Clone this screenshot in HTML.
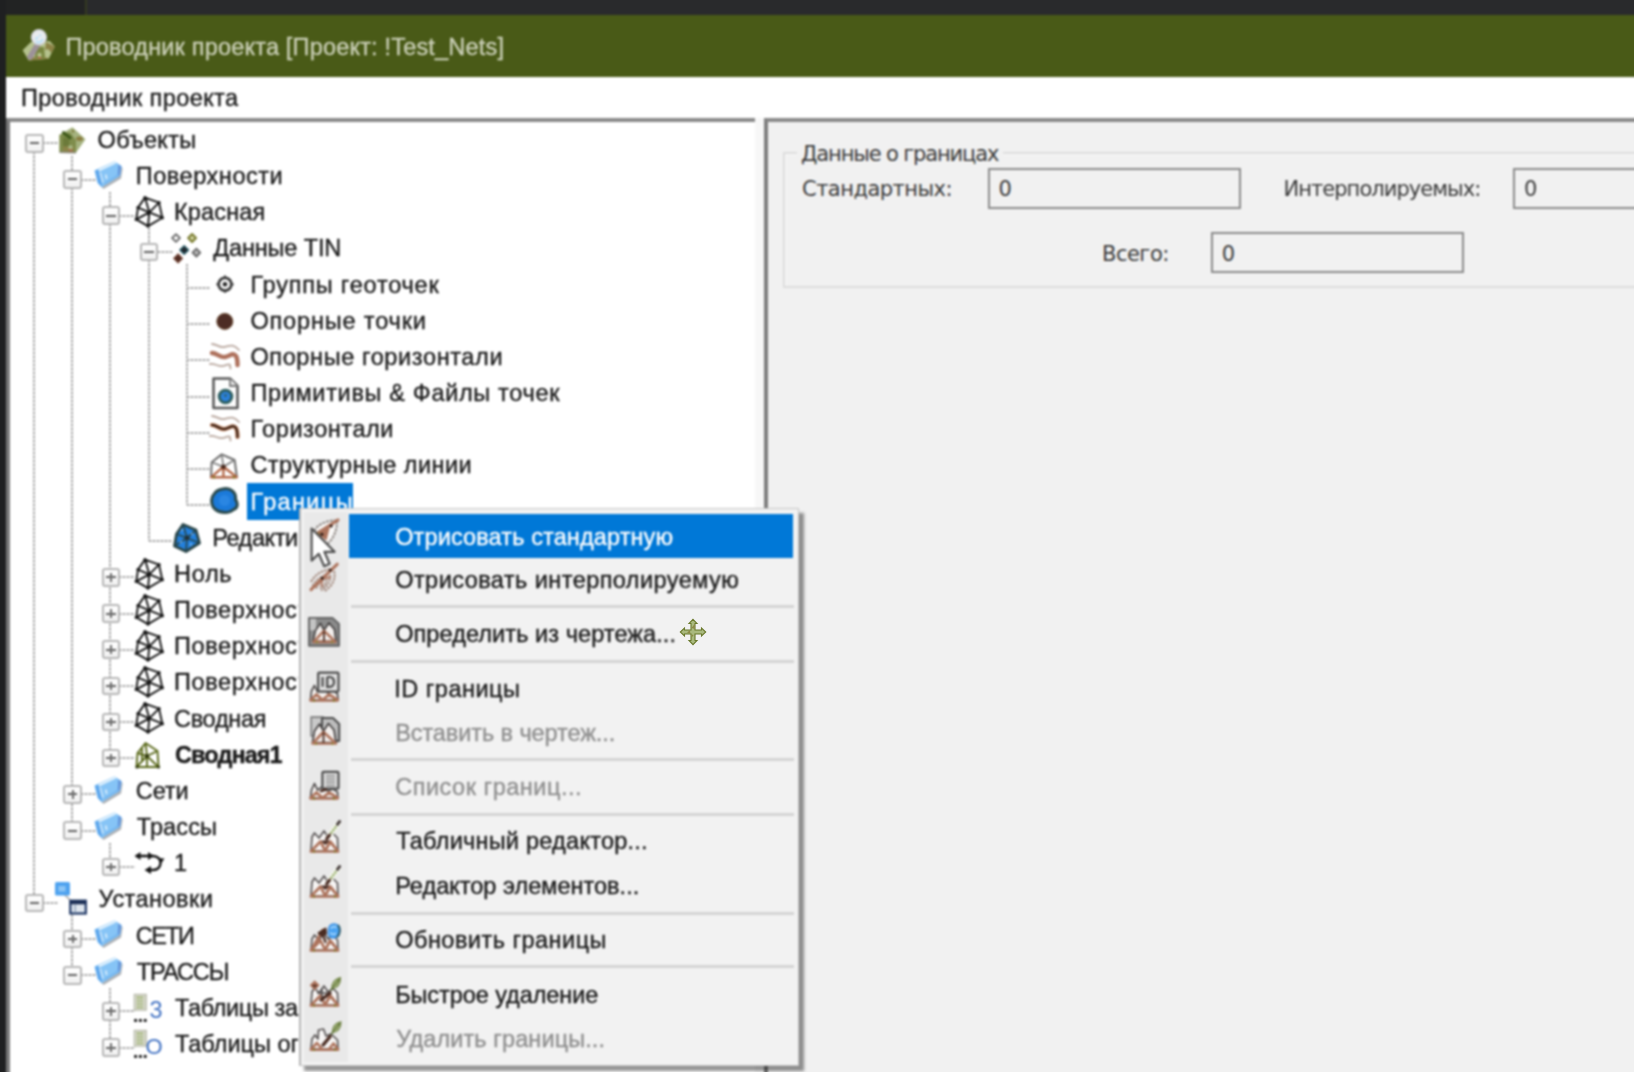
<!DOCTYPE html>
<html lang="ru"><head><meta charset="utf-8"><title>Проводник проекта</title>
<style>
html,body{margin:0;padding:0;background:#26282a}
body{width:1634px;height:1072px;overflow:hidden;background:#f0f0f0;font-family:"Liberation Sans",sans-serif}
#root{position:absolute;left:0;top:0;width:1634px;height:1072px;background:#f0f0f0;filter:blur(0.8px)}
.t{position:absolute;white-space:pre;line-height:30px;height:30px;-webkit-text-stroke:0.35px currentColor}
.ln{position:absolute}
.vl{background:repeating-linear-gradient(180deg,#a8a8a8 0,#a8a8a8 2px,#dcdcdc 2px,#dcdcdc 4px)}
.hl{background:repeating-linear-gradient(90deg,#a8a8a8 0,#a8a8a8 2px,#dcdcdc 2px,#dcdcdc 4px)}
.exp{position:absolute;width:14.5px;height:14.5px;border:2px solid #b6b6b6;background:linear-gradient(#fff,#f1f1f1);border-radius:3px}
.exp .h{position:absolute;left:2.5px;top:6.25px;width:9.5px;height:2px;background:#606060}
.exp .v{position:absolute;left:6.25px;top:3px;width:2px;height:8.5px;background:#6c6c6c}
.ic{position:absolute;overflow:visible}
#tree{position:absolute;left:0;top:0;width:755px;height:1090px;overflow:hidden}
.menu{position:absolute;background:#f2f2f2;box-shadow:5px 5px 2.5px rgba(0,0,0,.42);border:1px solid #c6c6c6;border-left:2px solid #b6b6b6;box-sizing:border-box}
.menu .gut{position:absolute;left:3px;top:3px;bottom:3px;width:44px;background:#e9e9e9}
body>.ic{position:absolute}

</style></head>
<body>
<div id="root">
<div style="position:absolute;left:-10px;top:-10px;width:1660px;height:26px;background:#292a2c"></div>
<div style="position:absolute;left:-10px;top:-10px;width:96px;height:25px;background:#222323"></div>
<div style="position:absolute;left:85px;top:-10px;width:2px;height:25px;background:#353a22"></div>
<div style="position:absolute;left:-10px;top:-10px;width:16px;height:1100px;background:#1f2021"></div>
<div style="position:absolute;left:6px;top:15px;width:1650px;height:62px;background:#495a17"></div>
<div style="position:absolute;left:6px;top:77px;width:1650px;height:41px;background:#ffffff"></div>
<div style="position:absolute;left:6px;top:118px;width:749px;height:975px;background:#fff;border-top:4px solid #8a8a8a;border-left:4px solid #7a7a7a;box-sizing:border-box"></div>
<div style="position:absolute;left:755px;top:118px;width:9px;height:975px;background:#f7f7f7"></div>
<div style="position:absolute;left:764px;top:118px;width:895px;height:975px;background:#f1f1f1;border-top:4px solid #8a8a8a;border-left:4px solid #7e7e7e;box-sizing:border-box"></div>
<svg class="ic" style="left:18px;top:26px" width="42" height="40" viewBox="18 26 42 40"><polygon points="22.6,50.3 31,42 49.7,41 54.8,46.6 48.7,58.7 28.7,60.6" fill="#b5c28d"/><polygon points="46,42 54.8,46.6 51.5,53 48,49 45,50" fill="#8c8246"/><polygon points="30,57 47,57.5 48.7,58.7 28.7,60.6" fill="#8c8246"/><polygon points="36,47 44,47 45,58 35,58" fill="#78863f"/><path d="M38,44 L30,57" stroke="#9d9298" stroke-width="5.5" stroke-linecap="round"/><circle cx="39.5" cy="55" r="2.2" fill="#b5c28d"/><path d="M38,57 l3,1" stroke="#c8564a" stroke-width="1.2"/><circle cx="38.9" cy="37.3" r="7.6" fill="#e9ebee" stroke="#c9cbd2" stroke-width="1.2"/><path d="M36,39 l1.5,-1.5 M36.5,42 c2.5,1 5,0 6,-2.5 M40,35.5 h0.5" stroke="#a9dcfb" stroke-width="1.7" stroke-linecap="round" fill="none"/></svg>
<div id="tree">
<div class="ln hl" style="left:43.0px;top:142.3px;width:15.2px;height:2px"></div>
<div class="ln hl" style="left:81.2px;top:178.5px;width:15.2px;height:2px"></div>
<div class="ln hl" style="left:119.4px;top:214.6px;width:15.2px;height:2px"></div>
<div class="ln hl" style="left:157.6px;top:250.8px;width:15.2px;height:2px"></div>
<div class="ln hl" style="left:186.8px;top:287.0px;width:23.2px;height:2px"></div>
<div class="ln hl" style="left:186.8px;top:323.2px;width:23.2px;height:2px"></div>
<div class="ln hl" style="left:186.8px;top:359.3px;width:23.2px;height:2px"></div>
<div class="ln hl" style="left:186.8px;top:395.5px;width:23.2px;height:2px"></div>
<div class="ln hl" style="left:186.8px;top:431.7px;width:23.2px;height:2px"></div>
<div class="ln hl" style="left:186.8px;top:467.8px;width:23.2px;height:2px"></div>
<div class="ln hl" style="left:186.8px;top:504.0px;width:23.2px;height:2px"></div>
<div class="ln hl" style="left:148.6px;top:540.2px;width:23.2px;height:2px"></div>
<div class="ln hl" style="left:119.4px;top:576.3px;width:15.2px;height:2px"></div>
<div class="ln hl" style="left:119.4px;top:612.5px;width:15.2px;height:2px"></div>
<div class="ln hl" style="left:119.4px;top:648.7px;width:15.2px;height:2px"></div>
<div class="ln hl" style="left:119.4px;top:684.9px;width:15.2px;height:2px"></div>
<div class="ln hl" style="left:119.4px;top:721.0px;width:15.2px;height:2px"></div>
<div class="ln hl" style="left:119.4px;top:757.2px;width:15.2px;height:2px"></div>
<div class="ln hl" style="left:81.2px;top:793.4px;width:15.2px;height:2px"></div>
<div class="ln hl" style="left:81.2px;top:829.5px;width:15.2px;height:2px"></div>
<div class="ln hl" style="left:119.4px;top:865.7px;width:15.2px;height:2px"></div>
<div class="ln hl" style="left:43.0px;top:901.9px;width:15.2px;height:2px"></div>
<div class="ln hl" style="left:81.2px;top:938.0px;width:15.2px;height:2px"></div>
<div class="ln hl" style="left:81.2px;top:974.2px;width:15.2px;height:2px"></div>
<div class="ln hl" style="left:119.4px;top:1010.4px;width:15.2px;height:2px"></div>
<div class="ln hl" style="left:119.4px;top:1046.5px;width:15.2px;height:2px"></div>
<div class="ln vl" style="left:71.2px;top:155.8px;width:2px;height:674.7px"></div>
<div class="ln vl" style="left:109.4px;top:192.0px;width:2px;height:566.2px"></div>
<div class="ln vl" style="left:147.6px;top:228.1px;width:2px;height:313.0px"></div>
<div class="ln vl" style="left:185.8px;top:264.3px;width:2px;height:240.7px"></div>
<div class="ln vl" style="left:109.4px;top:843.0px;width:2px;height:23.7px"></div>
<div class="ln vl" style="left:71.2px;top:915.4px;width:2px;height:59.8px"></div>
<div class="ln vl" style="left:109.4px;top:987.7px;width:2px;height:59.8px"></div>
<div class="ln vl" style="left:33.0px;top:152.3px;width:2px;height:741.6px"></div>
<div class="exp" style="left:25.1px;top:134.1px"><i class="h"></i></div>
<svg class="ic" style="left:54.2px;top:121.7px" width="36" height="36" viewBox="-18.0 -18.0 36 36"><g transform="translate(0,1.3)"><polygon points="-12.5,-6.5 0.5,-14 13.5,-2 4,11.5 -12.5,11" fill="#a5b27f"/><polygon points="-12.5,-6.5 -2,-9 4,-1 4,11.5 -12.5,11" fill="#7f8d4c"/><polygon points="-9,-4 -3,-2 -2,9 -9,9" fill="#6b7a3a"/><path d="M-8.5,-8.5 L-2,-3.5" stroke="#3f591a" stroke-width="3.2" stroke-linecap="round"/><ellipse cx="7.5" cy="-2.5" rx="3.4" ry="2.2" fill="#8a7e42"/><path d="M0,-11 l2,2 m0,-2 l-2,2" stroke="#7c7a3a" stroke-width="1.3"/><rect x="-9" y="5" width="11" height="5.5" fill="#8b8448"/><circle cx="-1.5" cy="6" r="2.2" fill="#a7b784"/><path d="M-3,8 l3,2" stroke="#c65a4a" stroke-width="1.2"/><path d="M-12.5,11 L4,11.5" stroke="#8d8a80" stroke-width="1.6"/></g></svg>
<div class="exp" style="left:63.4px;top:170.2px"><i class="h"></i></div>
<svg class="ic" style="left:92.4px;top:157.8px" width="36" height="36" viewBox="-18.0 -18.0 36 36"><polygon points="-14,-2 -10.5,9 -6.5,13 11,2.5 12.6,-7.5 9.5,-11.5" fill="#adb0b4"/><polygon points="-14.9,-5.1 4.5,-14 11.2,-9.5 9.7,-0.6 -8.2,10.6 -11.9,6.9" fill="#86c4f6" stroke="#86c4f6" stroke-width="1.2" stroke-linejoin="round"/><polygon points="-14.9,-5.1 -11.5,-6.7 -8,8.5 -8.2,10.6 -11.9,6.9" fill="#5ea6ec"/><polygon points="8.3,-11.4 11.2,-9.5 9.7,-0.6 7.6,0.7" fill="#6494da"/><path d="M-10.5,-6 L5,-13.2" stroke="#e3f2fd" stroke-width="2.2" stroke-linecap="round"/><path d="M-9.8,-3 L-7.2,6" stroke="#c4e2fa" stroke-width="1.8" stroke-linecap="round"/><path d="M-4.2,-1.5 l0.9,4.5" stroke="#e3f2fd" stroke-width="1.5"/><path d="M-6,8 L9,-1.2" stroke="#6fb2ee" stroke-width="1.4"/></svg>
<div class="exp" style="left:101.6px;top:206.4px"><i class="h"></i></div>
<svg class="ic" style="left:130.6px;top:194.0px" width="36" height="36" viewBox="-18.0 -18.0 36 36"><path d="M-4,-14.4 L10,-9.4 L13.3,5.7 L-1,14.1 L-12.7,7.4 L-11,-4.4 Z M0.3,0.3 L-4,-14.4 M0.3,0.3 L10,-9.4 M0.3,0.3 L13.3,5.7 M0.3,0.3 L-1,14.1 M0.3,0.3 L-12.7,7.4 M0.3,0.3 L-11,-4.4" fill="none" stroke="#151515" stroke-width="1.9" stroke-linejoin="round"/><circle cx="-4" cy="-14.4" r="1.7" fill="#151515"/><circle cx="10" cy="-9.4" r="1.7" fill="#151515"/><circle cx="13.3" cy="5.7" r="1.7" fill="#151515"/><circle cx="-1" cy="14.1" r="1.7" fill="#151515"/><circle cx="-12.7" cy="7.4" r="1.7" fill="#151515"/><circle cx="-11" cy="-4.4" r="1.7" fill="#151515"/><circle cx="0.3" cy="0.3" r="1.7" fill="#151515"/></svg>
<div class="exp" style="left:139.8px;top:242.6px"><i class="h"></i></div>
<svg class="ic" style="left:168.8px;top:230.2px" width="36" height="36" viewBox="-18.0 -18.0 36 36"><polygon points="-11,-13.9 -7.1,-10 -11,-6.1 -14.9,-10" fill="#fff" stroke="#6e6e6e" stroke-width="1.8" stroke-linejoin="round"/><polygon points="5.1,-13.9 9.0,-10 5.1,-6.1 1.1999999999999997,-10" fill="#d9dcae" stroke="#7d7f35" stroke-width="2.2" stroke-linejoin="round"/><polygon points="-2.8,-2.4000000000000004 1.6000000000000005,2 -2.8,6.4 -7.2,2" fill="#20262c" stroke="#2e6470" stroke-width="1.3" stroke-linejoin="round"/><polygon points="9.4,0.6999999999999997 13.3,4.6 9.4,8.5 5.5,4.6" fill="#b9b9b9" stroke="#666" stroke-width="1.8" stroke-linejoin="round"/><polygon points="-8.9,6.0 -4.5,10.4 -8.9,14.8 -13.3,10.4" fill="#4f2b22" stroke="#7a4a3a" stroke-width="1.2" stroke-linejoin="round"/></svg>
<svg class="ic" style="left:207.0px;top:266.3px" width="36" height="36" viewBox="-18.0 -18.0 36 36"><circle cx="0" cy="0.2" r="6.4" fill="#fff" stroke="#3a3a3a" stroke-width="2.8"/><circle cx="0" cy="0.2" r="2.3" fill="#222"/><path d="M-8.6,0.2 h3 M5.6,0.2 h3 M0,-8.4 v3 M0,5.8 v3" stroke="#3a3a3a" stroke-width="2"/></svg>
<svg class="ic" style="left:207.0px;top:302.5px" width="36" height="36" viewBox="-18.0 -18.0 36 36"><circle cx="-0.2" cy="0.4" r="8" fill="#4d2c24" stroke="#6a4a30" stroke-width="1"/></svg>
<svg class="ic" style="left:207.0px;top:338.7px" width="36" height="36" viewBox="-18.0 -18.0 36 36"><path d="M-13,-13 C-8,-13 -6,-9 -1,-10 C4,-11 8,-14 14,-7" fill="none" stroke="#b9a89f" stroke-width="1.8" stroke-linecap="round"/><path d="M-15,7 C-10,6 -7,10 -2,9 C2,8 4,6 5,8 L5.5,11.5" fill="none" stroke="#b9a89f" stroke-width="1.8" stroke-linecap="round"/><path d="M-13,-4 C-8,-4 -5,1 0,0 C5,-1 8,-5 11,-1 C12.5,1.5 12.5,5 12.5,8" fill="none" stroke="#ae715c" stroke-width="4.4" stroke-linecap="round"/></svg>
<svg class="ic" style="left:207.0px;top:374.9px" width="36" height="36" viewBox="-18.0 -18.0 36 36"><path d="M-11.5,-14.5 H5 L12.5,-7 V15 H-11.5 Z" fill="#fdfdfd" stroke="#5a5a5a" stroke-width="2.6" stroke-linejoin="round"/><path d="M5,-14.5 V-7 H12.5" fill="#e8e8e8" stroke="#7a7a7a" stroke-width="1.8"/><circle cx="0.5" cy="3.5" r="6.3" fill="#2b80dc" stroke="#2f5f60" stroke-width="3"/><path d="M-1.5,1.5 h4 l-2,3 z" fill="#2f5f60"/></svg>
<svg class="ic" style="left:207.0px;top:411.0px" width="36" height="36" viewBox="-18.0 -18.0 36 36"><path d="M-13,-13 C-8,-13 -6,-9 -1,-10 C4,-11 8,-14 14,-7" fill="none" stroke="#b9a89f" stroke-width="1.8" stroke-linecap="round"/><path d="M-15,7 C-10,6 -7,10 -2,9 C2,8 4,6 5,8 L5.5,11.5" fill="none" stroke="#b9a89f" stroke-width="1.8" stroke-linecap="round"/><path d="M-13,-4 C-8,-4 -5,1 0,0 C5,-1 8,-5 11,-1 C12.5,1.5 12.5,5 12.5,8" fill="none" stroke="#b9754f" stroke-width="4.2" stroke-linecap="round"/><path d="M-13,-4 C-8,-4 -5,1 0,0 C5,-1 8,-5 11,-1 C12.5,1.5 12.5,5 12.5,8" fill="none" stroke="#2c1d16" stroke-width="1.9" stroke-linecap="round"/></svg>
<svg class="ic" style="left:207.0px;top:447.2px" width="36" height="36" viewBox="-18.0 -18.0 36 36"><path d="M-14,12.5 L-13.3,-2.8 L-3.3,-10.6 L9.6,-5 L11.9,12.5" fill="#fff" stroke="#6d6d6d" stroke-width="2" stroke-linejoin="round"/><path d="M-3.3,-10.6 L-1.6,1.7 M-13.3,-2.8 L-1.6,1.7 M9.6,-5 L-1.6,1.7" stroke="#7a7a7a" stroke-width="1.6"/><path d="M-14,12.3 L-1.6,1.7 L11.9,12.3 Z M-1.6,1.7 V12.3" fill="none" stroke="#b4694a" stroke-width="2.4" stroke-linejoin="round"/><circle cx="-1.6" cy="1.7" r="2.3" fill="#43251a"/><circle cx="-11" cy="12.3" r="1.2" fill="#7d7a20"/><circle cx="9" cy="12.3" r="1.2" fill="#7d7a20"/></svg>
<svg class="ic" style="left:207.0px;top:483.4px" width="36" height="36" viewBox="-18.0 -18.0 36 36"><path d="M-2.5,-12 C5.5,-14 11.5,-8.5 10.5,-1.5 C13.5,2.5 12.5,7.5 8.5,8.5 C4.5,12.5 -4.5,12.5 -9.5,8.5 C-14.5,4.5 -14.5,-3.5 -10.5,-7.5 C-8.5,-10.5 -5.5,-11.5 -2.5,-12 Z" fill="#1b7ada" stroke="#2b4a4d" stroke-width="3"/><circle cx="-0.5" cy="-0.5" r="5.5" fill="#2a86e2"/></svg>
<div style="position:absolute;left:246.8px;top:483.2px;width:106.4px;height:36.4px;background:#0078d7"></div>
<svg class="ic" style="left:168.8px;top:519.5px" width="36" height="36" viewBox="-18.0 -18.0 36 36"><path d="M-4,-13.5 L9,-8 L12.5,5 L-1,13.5 L-12.5,8 L-10.5,-4 Z" fill="#2380dd" stroke="#2a4548" stroke-width="2.8" stroke-linejoin="round"/><path d="M0,0 L-4,-13.5 M0,0 L9,-8 M0,0 L12.5,5 M0,0 L-1,13.5 M0,0 L-12.5,8 M0,0 L-10.5,-4" stroke="#27474f" stroke-width="1.7"/><circle cx="0" cy="0" r="2.4" fill="#20323a"/><path d="M-6,-7 l2,-2 M4,-5 l2,2 M-7,5 l2,-2 M4,8 l0,-3" stroke="#7fbaf2" stroke-width="1.4"/></svg>
<div class="exp" style="left:101.6px;top:568.1px"><i class="h"></i><i class="v"></i></div>
<svg class="ic" style="left:130.6px;top:555.7px" width="36" height="36" viewBox="-18.0 -18.0 36 36"><path d="M-4,-14.4 L10,-9.4 L13.3,5.7 L-1,14.1 L-12.7,7.4 L-11,-4.4 Z M0.3,0.3 L-4,-14.4 M0.3,0.3 L10,-9.4 M0.3,0.3 L13.3,5.7 M0.3,0.3 L-1,14.1 M0.3,0.3 L-12.7,7.4 M0.3,0.3 L-11,-4.4" fill="none" stroke="#151515" stroke-width="1.9" stroke-linejoin="round"/><circle cx="-4" cy="-14.4" r="1.7" fill="#151515"/><circle cx="10" cy="-9.4" r="1.7" fill="#151515"/><circle cx="13.3" cy="5.7" r="1.7" fill="#151515"/><circle cx="-1" cy="14.1" r="1.7" fill="#151515"/><circle cx="-12.7" cy="7.4" r="1.7" fill="#151515"/><circle cx="-11" cy="-4.4" r="1.7" fill="#151515"/><circle cx="0.3" cy="0.3" r="1.7" fill="#151515"/></svg>
<div class="exp" style="left:101.6px;top:604.3px"><i class="h"></i><i class="v"></i></div>
<svg class="ic" style="left:130.6px;top:591.9px" width="36" height="36" viewBox="-18.0 -18.0 36 36"><path d="M-4,-14.4 L10,-9.4 L13.3,5.7 L-1,14.1 L-12.7,7.4 L-11,-4.4 Z M0.3,0.3 L-4,-14.4 M0.3,0.3 L10,-9.4 M0.3,0.3 L13.3,5.7 M0.3,0.3 L-1,14.1 M0.3,0.3 L-12.7,7.4 M0.3,0.3 L-11,-4.4" fill="none" stroke="#151515" stroke-width="1.9" stroke-linejoin="round"/><circle cx="-4" cy="-14.4" r="1.7" fill="#151515"/><circle cx="10" cy="-9.4" r="1.7" fill="#151515"/><circle cx="13.3" cy="5.7" r="1.7" fill="#151515"/><circle cx="-1" cy="14.1" r="1.7" fill="#151515"/><circle cx="-12.7" cy="7.4" r="1.7" fill="#151515"/><circle cx="-11" cy="-4.4" r="1.7" fill="#151515"/><circle cx="0.3" cy="0.3" r="1.7" fill="#151515"/></svg>
<div class="exp" style="left:101.6px;top:640.4px"><i class="h"></i><i class="v"></i></div>
<svg class="ic" style="left:130.6px;top:628.0px" width="36" height="36" viewBox="-18.0 -18.0 36 36"><path d="M-4,-14.4 L10,-9.4 L13.3,5.7 L-1,14.1 L-12.7,7.4 L-11,-4.4 Z M0.3,0.3 L-4,-14.4 M0.3,0.3 L10,-9.4 M0.3,0.3 L13.3,5.7 M0.3,0.3 L-1,14.1 M0.3,0.3 L-12.7,7.4 M0.3,0.3 L-11,-4.4" fill="none" stroke="#151515" stroke-width="1.9" stroke-linejoin="round"/><circle cx="-4" cy="-14.4" r="1.7" fill="#151515"/><circle cx="10" cy="-9.4" r="1.7" fill="#151515"/><circle cx="13.3" cy="5.7" r="1.7" fill="#151515"/><circle cx="-1" cy="14.1" r="1.7" fill="#151515"/><circle cx="-12.7" cy="7.4" r="1.7" fill="#151515"/><circle cx="-11" cy="-4.4" r="1.7" fill="#151515"/><circle cx="0.3" cy="0.3" r="1.7" fill="#151515"/></svg>
<div class="exp" style="left:101.6px;top:676.6px"><i class="h"></i><i class="v"></i></div>
<svg class="ic" style="left:130.6px;top:664.2px" width="36" height="36" viewBox="-18.0 -18.0 36 36"><path d="M-4,-14.4 L10,-9.4 L13.3,5.7 L-1,14.1 L-12.7,7.4 L-11,-4.4 Z M0.3,0.3 L-4,-14.4 M0.3,0.3 L10,-9.4 M0.3,0.3 L13.3,5.7 M0.3,0.3 L-1,14.1 M0.3,0.3 L-12.7,7.4 M0.3,0.3 L-11,-4.4" fill="none" stroke="#151515" stroke-width="1.9" stroke-linejoin="round"/><circle cx="-4" cy="-14.4" r="1.7" fill="#151515"/><circle cx="10" cy="-9.4" r="1.7" fill="#151515"/><circle cx="13.3" cy="5.7" r="1.7" fill="#151515"/><circle cx="-1" cy="14.1" r="1.7" fill="#151515"/><circle cx="-12.7" cy="7.4" r="1.7" fill="#151515"/><circle cx="-11" cy="-4.4" r="1.7" fill="#151515"/><circle cx="0.3" cy="0.3" r="1.7" fill="#151515"/></svg>
<div class="exp" style="left:101.6px;top:712.8px"><i class="h"></i><i class="v"></i></div>
<svg class="ic" style="left:130.6px;top:700.4px" width="36" height="36" viewBox="-18.0 -18.0 36 36"><path d="M-4,-14.4 L10,-9.4 L13.3,5.7 L-1,14.1 L-12.7,7.4 L-11,-4.4 Z M0.3,0.3 L-4,-14.4 M0.3,0.3 L10,-9.4 M0.3,0.3 L13.3,5.7 M0.3,0.3 L-1,14.1 M0.3,0.3 L-12.7,7.4 M0.3,0.3 L-11,-4.4" fill="none" stroke="#151515" stroke-width="1.9" stroke-linejoin="round"/><circle cx="-4" cy="-14.4" r="1.7" fill="#151515"/><circle cx="10" cy="-9.4" r="1.7" fill="#151515"/><circle cx="13.3" cy="5.7" r="1.7" fill="#151515"/><circle cx="-1" cy="14.1" r="1.7" fill="#151515"/><circle cx="-12.7" cy="7.4" r="1.7" fill="#151515"/><circle cx="-11" cy="-4.4" r="1.7" fill="#151515"/><circle cx="0.3" cy="0.3" r="1.7" fill="#151515"/></svg>
<div class="exp" style="left:101.6px;top:748.9px"><i class="h"></i><i class="v"></i></div>
<svg class="ic" style="left:130.6px;top:736.5px" width="36" height="36" viewBox="-18.0 -18.0 36 36"><path d="M-12.5,12 L-11.5,-2 L-3.5,-12 L8.5,-4 L9.5,12 Z M-2,1 L-12.5,12 M-2,1 L9.5,12 M-2,1 L-3.5,-12 M-2,1 L-11.5,-2 M-2,1 L8.5,-4 M-2,1 L-2,12 M-7,-7.5 L-7,6" fill="none" stroke="#5b6a1c" stroke-width="1.9" stroke-linejoin="round"/><circle cx="-2" cy="1" r="2" fill="#2d3510"/><circle cx="-12" cy="12" r="1.6" fill="#2d3510"/><circle cx="9.5" cy="12" r="1.6" fill="#2d3510"/></svg>
<div class="exp" style="left:63.4px;top:785.1px"><i class="h"></i><i class="v"></i></div>
<svg class="ic" style="left:92.4px;top:772.7px" width="36" height="36" viewBox="-18.0 -18.0 36 36"><polygon points="-14,-2 -10.5,9 -6.5,13 11,2.5 12.6,-7.5 9.5,-11.5" fill="#adb0b4"/><polygon points="-14.9,-5.1 4.5,-14 11.2,-9.5 9.7,-0.6 -8.2,10.6 -11.9,6.9" fill="#86c4f6" stroke="#86c4f6" stroke-width="1.2" stroke-linejoin="round"/><polygon points="-14.9,-5.1 -11.5,-6.7 -8,8.5 -8.2,10.6 -11.9,6.9" fill="#5ea6ec"/><polygon points="8.3,-11.4 11.2,-9.5 9.7,-0.6 7.6,0.7" fill="#6494da"/><path d="M-10.5,-6 L5,-13.2" stroke="#e3f2fd" stroke-width="2.2" stroke-linecap="round"/><path d="M-9.8,-3 L-7.2,6" stroke="#c4e2fa" stroke-width="1.8" stroke-linecap="round"/><path d="M-4.2,-1.5 l0.9,4.5" stroke="#e3f2fd" stroke-width="1.5"/><path d="M-6,8 L9,-1.2" stroke="#6fb2ee" stroke-width="1.4"/></svg>
<div class="exp" style="left:63.4px;top:821.3px"><i class="h"></i></div>
<svg class="ic" style="left:92.4px;top:808.9px" width="36" height="36" viewBox="-18.0 -18.0 36 36"><polygon points="-14,-2 -10.5,9 -6.5,13 11,2.5 12.6,-7.5 9.5,-11.5" fill="#adb0b4"/><polygon points="-14.9,-5.1 4.5,-14 11.2,-9.5 9.7,-0.6 -8.2,10.6 -11.9,6.9" fill="#86c4f6" stroke="#86c4f6" stroke-width="1.2" stroke-linejoin="round"/><polygon points="-14.9,-5.1 -11.5,-6.7 -8,8.5 -8.2,10.6 -11.9,6.9" fill="#5ea6ec"/><polygon points="8.3,-11.4 11.2,-9.5 9.7,-0.6 7.6,0.7" fill="#6494da"/><path d="M-10.5,-6 L5,-13.2" stroke="#e3f2fd" stroke-width="2.2" stroke-linecap="round"/><path d="M-9.8,-3 L-7.2,6" stroke="#c4e2fa" stroke-width="1.8" stroke-linecap="round"/><path d="M-4.2,-1.5 l0.9,4.5" stroke="#e3f2fd" stroke-width="1.5"/><path d="M-6,8 L9,-1.2" stroke="#6fb2ee" stroke-width="1.4"/></svg>
<div class="exp" style="left:101.6px;top:857.5px"><i class="h"></i><i class="v"></i></div>
<svg class="ic" style="left:130.6px;top:845.1px" width="36" height="36" viewBox="-18.0 -18.0 36 36"><path d="M-13,-7 H4 C14,-7 14,7 4,7 H-2" fill="none" stroke="#161616" stroke-width="2.4"/><path d="M-14.5,-7 L-8.5,-11 V-3 Z" fill="#161616"/><path d="M5,-7 L-1,-11 V-3 Z" fill="#161616"/><path d="M12.5,0 L8,-5 L15.5,-4.5 Z" fill="#161616"/><path d="M-4.5,7 L2,3 V11 Z" fill="#161616"/></svg>
<div class="exp" style="left:25.1px;top:893.6px"><i class="h"></i></div>
<svg class="ic" style="left:54.2px;top:881.2px" width="36" height="36" viewBox="-18.0 -18.0 36 36"><path d="M-9,-6 L-2,1" stroke="#9a9a9a" stroke-width="1.2"/><rect x="-17" y="-17" width="15" height="13.5" rx="1.5" fill="#4ea2ef"/><rect x="-13.5" y="-13" width="7" height="5.5" fill="#8cc5f6"/><rect x="-1.7" y="1.7" width="15.5" height="12.8" fill="#dfe6ee" stroke="#1f3765" stroke-width="2.2"/><rect x="-1.7" y="1.7" width="15.5" height="3.6" fill="#1c2f55"/><path d="M3.2,5.5 V14" stroke="#8ea0b8" stroke-width="1.4"/></svg>
<div class="exp" style="left:63.4px;top:929.8px"><i class="h"></i><i class="v"></i></div>
<svg class="ic" style="left:92.4px;top:917.4px" width="36" height="36" viewBox="-18.0 -18.0 36 36"><polygon points="-14,-2 -10.5,9 -6.5,13 11,2.5 12.6,-7.5 9.5,-11.5" fill="#adb0b4"/><polygon points="-14.9,-5.1 4.5,-14 11.2,-9.5 9.7,-0.6 -8.2,10.6 -11.9,6.9" fill="#86c4f6" stroke="#86c4f6" stroke-width="1.2" stroke-linejoin="round"/><polygon points="-14.9,-5.1 -11.5,-6.7 -8,8.5 -8.2,10.6 -11.9,6.9" fill="#5ea6ec"/><polygon points="8.3,-11.4 11.2,-9.5 9.7,-0.6 7.6,0.7" fill="#6494da"/><path d="M-10.5,-6 L5,-13.2" stroke="#e3f2fd" stroke-width="2.2" stroke-linecap="round"/><path d="M-9.8,-3 L-7.2,6" stroke="#c4e2fa" stroke-width="1.8" stroke-linecap="round"/><path d="M-4.2,-1.5 l0.9,4.5" stroke="#e3f2fd" stroke-width="1.5"/><path d="M-6,8 L9,-1.2" stroke="#6fb2ee" stroke-width="1.4"/></svg>
<div class="exp" style="left:63.4px;top:966.0px"><i class="h"></i></div>
<svg class="ic" style="left:92.4px;top:953.6px" width="36" height="36" viewBox="-18.0 -18.0 36 36"><polygon points="-14,-2 -10.5,9 -6.5,13 11,2.5 12.6,-7.5 9.5,-11.5" fill="#adb0b4"/><polygon points="-14.9,-5.1 4.5,-14 11.2,-9.5 9.7,-0.6 -8.2,10.6 -11.9,6.9" fill="#86c4f6" stroke="#86c4f6" stroke-width="1.2" stroke-linejoin="round"/><polygon points="-14.9,-5.1 -11.5,-6.7 -8,8.5 -8.2,10.6 -11.9,6.9" fill="#5ea6ec"/><polygon points="8.3,-11.4 11.2,-9.5 9.7,-0.6 7.6,0.7" fill="#6494da"/><path d="M-10.5,-6 L5,-13.2" stroke="#e3f2fd" stroke-width="2.2" stroke-linecap="round"/><path d="M-9.8,-3 L-7.2,6" stroke="#c4e2fa" stroke-width="1.8" stroke-linecap="round"/><path d="M-4.2,-1.5 l0.9,4.5" stroke="#e3f2fd" stroke-width="1.5"/><path d="M-6,8 L9,-1.2" stroke="#6fb2ee" stroke-width="1.4"/></svg>
<div class="exp" style="left:101.6px;top:1002.1px"><i class="h"></i><i class="v"></i></div>
<svg class="ic" style="left:130.6px;top:989.7px" width="36" height="36" viewBox="-18.0 -18.0 36 36"><rect x="-14.8" y="-13.7" width="12.1" height="15.9" fill="#d3d5c6" stroke="#b3b5a6" stroke-width="1"/><path d="M-12,-10.5 h6.5 M-12,-7.2 h6.5 M-12,-3.9 h6.5 M-12,-0.6 h6.5" stroke="#86a548" stroke-width="1.3" stroke-dasharray="2.2 0.9"/><circle cx="-13.4" cy="12.4" r="1.6" fill="#111"/><circle cx="-8.6" cy="12.4" r="1.6" fill="#111"/><circle cx="-3.8" cy="12.4" r="1.6" fill="#111"/><text x="0.6" y="9.6" font-family="Liberation Sans, sans-serif" font-size="23.5" fill="#3f70c2">3</text></svg>
<div class="exp" style="left:101.6px;top:1038.3px"><i class="h"></i><i class="v"></i></div>
<svg class="ic" style="left:130.6px;top:1025.9px" width="36" height="36" viewBox="-18.0 -18.0 36 36"><rect x="-14.8" y="-13.7" width="12.1" height="15.9" fill="#d3d5c6" stroke="#b3b5a6" stroke-width="1"/><path d="M-12,-10.5 h6.5 M-12,-7.2 h6.5 M-12,-3.9 h6.5 M-12,-0.6 h6.5" stroke="#86a548" stroke-width="1.3" stroke-dasharray="2.2 0.9"/><circle cx="-13.4" cy="12.4" r="1.6" fill="#111"/><circle cx="-8.6" cy="12.4" r="1.6" fill="#111"/><circle cx="-3.8" cy="12.4" r="1.6" fill="#111"/><text x="-3.4" y="9.8" font-family="Liberation Sans, sans-serif" font-size="22" fill="#3f70c2">O</text></svg>
<span class="t" style="left:97.6px;top:124.8px;font-size:23.5px;color:#1a1a1a;letter-spacing:0.263px;">Объекты</span>
<span class="t" style="left:135.8px;top:161.0px;font-size:23.5px;color:#1a1a1a;letter-spacing:0.543px;">Поверхности</span>
<span class="t" style="left:174.0px;top:197.1px;font-size:23.5px;color:#1a1a1a;letter-spacing:0.146px;">Красная</span>
<span class="t" style="left:213.2px;top:233.3px;font-size:23.5px;color:#1a1a1a;letter-spacing:-0.135px;">Данные TIN</span>
<span class="t" style="left:250.4px;top:269.5px;font-size:23.5px;color:#1a1a1a;letter-spacing:0.802px;">Группы геоточек</span>
<span class="t" style="left:250.4px;top:305.7px;font-size:23.5px;color:#1a1a1a;letter-spacing:0.851px;">Опорные точки</span>
<span class="t" style="left:250.4px;top:341.8px;font-size:23.5px;color:#1a1a1a;letter-spacing:0.624px;">Опорные горизонтали</span>
<span class="t" style="left:250.4px;top:378.0px;font-size:23.5px;color:#1a1a1a;letter-spacing:0.676px;">Примитивы &amp; Файлы точек</span>
<span class="t" style="left:250.4px;top:414.2px;font-size:23.5px;color:#1a1a1a;letter-spacing:0.564px;">Горизонтали</span>
<span class="t" style="left:250.4px;top:450.3px;font-size:23.5px;color:#1a1a1a;letter-spacing:0.461px;">Структурные линии</span>
<span class="t" style="left:250.4px;top:486.5px;font-size:23.5px;color:#ffffff;letter-spacing:1.365px;">Границы</span>
<span class="t" style="left:212.2px;top:522.7px;font-size:23.5px;color:#1a1a1a;letter-spacing:-0.397px;width:85.6px;overflow:hidden;">Редактирование</span>
<span class="t" style="left:174.0px;top:558.8px;font-size:23.5px;color:#1a1a1a;letter-spacing:0.688px;">Ноль</span>
<span class="t" style="left:174.0px;top:595.0px;font-size:23.5px;color:#1a1a1a;letter-spacing:0.643px;width:123.7px;overflow:hidden;">Поверхность1</span>
<span class="t" style="left:174.0px;top:631.2px;font-size:23.5px;color:#1a1a1a;letter-spacing:0.643px;width:123.7px;overflow:hidden;">Поверхность2</span>
<span class="t" style="left:174.0px;top:667.4px;font-size:23.5px;color:#1a1a1a;letter-spacing:0.643px;width:123.7px;overflow:hidden;">Поверхность3</span>
<span class="t" style="left:174.0px;top:703.5px;font-size:23.5px;color:#1a1a1a;letter-spacing:-0.284px;">Сводная</span>
<span class="t" style="left:175.0px;top:739.7px;font-size:23.5px;color:#1a1a1a;letter-spacing:-0.921px;font-weight:bold;">Сводная1</span>
<span class="t" style="left:135.8px;top:775.9px;font-size:23.5px;color:#1a1a1a;letter-spacing:-0.141px;">Сети</span>
<span class="t" style="left:136.8px;top:812.0px;font-size:23.5px;color:#1a1a1a;letter-spacing:0.105px;">Трассы</span>
<span class="t" style="left:174.0px;top:848.2px;font-size:23.5px;color:#1a1a1a;letter-spacing:0.000px;">1</span>
<span class="t" style="left:98.6px;top:884.4px;font-size:23.5px;color:#1a1a1a;letter-spacing:0.451px;">Установки</span>
<span class="t" style="left:135.8px;top:920.5px;font-size:23.5px;color:#1a1a1a;letter-spacing:-1.600px;">СЕТИ</span>
<span class="t" style="left:136.8px;top:956.7px;font-size:23.5px;color:#1a1a1a;letter-spacing:-1.131px;">ТРАССЫ</span>
<span class="t" style="left:175.0px;top:992.9px;font-size:23.5px;color:#1a1a1a;letter-spacing:-0.363px;width:124.7px;overflow:hidden;">Таблицы занятий</span>
<span class="t" style="left:175.0px;top:1029.0px;font-size:23.5px;color:#1a1a1a;letter-spacing:-0.011px;width:123.4px;overflow:hidden;">Таблицы ограничений</span>
</div>
<div style="position:absolute;left:783px;top:152px;width:870px;height:136px;border:2px solid #dcdcdc;box-sizing:border-box;box-shadow:inset 1px 1px 0 #fafafa"></div>
<div style="position:absolute;left:797px;top:140px;width:206px;height:24px;background:#f1f1f1"></div>
<div style="position:absolute;left:988px;top:168px;width:253px;height:41px;border:2px solid #8a8a8a;background:#f1f1f1;box-sizing:border-box"></div>
<div style="position:absolute;left:1513px;top:168px;width:253px;height:41px;border:2px solid #8a8a8a;background:#f1f1f1;box-sizing:border-box"></div>
<div style="position:absolute;left:1211px;top:232px;width:253px;height:41px;border:2px solid #8a8a8a;background:#f1f1f1;box-sizing:border-box"></div>
<span class="t" style="left:65.5px;top:31.8px;font-size:23.5px;color:#cbd0b8;letter-spacing:0.186px;">Проводник проекта [Проект: !Test_Nets]</span>
<span class="t" style="left:21.0px;top:83.4px;font-size:23.5px;color:#1a1a1a;letter-spacing:0.412px;">Проводник проекта</span>
<span class="t" style="left:801.1px;top:138.6px;font-size:21px;color:#3a3a3a;letter-spacing:-1.150px;font-family:'DejaVu Sans', 'Liberation Sans', sans-serif;-webkit-text-stroke:0;">Данные о границах</span>
<span class="t" style="left:802.0px;top:174.4px;font-size:21px;color:#3a3a3a;letter-spacing:-0.517px;font-family:'DejaVu Sans', 'Liberation Sans', sans-serif;-webkit-text-stroke:0;">Стандартных:</span>
<span class="t" style="left:1283.5px;top:174.4px;font-size:21px;color:#3a3a3a;letter-spacing:-0.960px;font-family:'DejaVu Sans', 'Liberation Sans', sans-serif;-webkit-text-stroke:0;">Интерполируемых:</span>
<span class="t" style="left:1102.1px;top:238.6px;font-size:21px;color:#3a3a3a;letter-spacing:-0.531px;font-family:'DejaVu Sans', 'Liberation Sans', sans-serif;-webkit-text-stroke:0;">Всего:</span>
<span class="t" style="left:998.5px;top:174.4px;font-size:21px;color:#3a3a3a;letter-spacing:0.000px;font-family:'DejaVu Sans', 'Liberation Sans', sans-serif;-webkit-text-stroke:0;">0</span>
<span class="t" style="left:1524.0px;top:174.4px;font-size:21px;color:#3a3a3a;letter-spacing:0.000px;font-family:'DejaVu Sans', 'Liberation Sans', sans-serif;-webkit-text-stroke:0;">0</span>
<span class="t" style="left:1221.7px;top:238.6px;font-size:21px;color:#3a3a3a;letter-spacing:0.000px;font-family:'DejaVu Sans', 'Liberation Sans', sans-serif;-webkit-text-stroke:0;">0</span>
<div class="menu" style="left:299px;top:508px;width:500px;height:558px"><div class="gut"></div></div>
<div style="position:absolute;left:351px;top:605.3px;width:443px;height:3px;background:#d4d4d4"></div>
<div style="position:absolute;left:351px;top:660.1px;width:443px;height:3px;background:#d4d4d4"></div>
<div style="position:absolute;left:351px;top:757.8px;width:443px;height:3px;background:#d4d4d4"></div>
<div style="position:absolute;left:351px;top:813.0px;width:443px;height:3px;background:#d4d4d4"></div>
<div style="position:absolute;left:351px;top:911.5px;width:443px;height:3px;background:#d4d4d4"></div>
<div style="position:absolute;left:351px;top:965.3px;width:443px;height:3px;background:#d4d4d4"></div>
<div style="position:absolute;left:349px;top:514px;width:444px;height:44px;background:#0078d7"></div>
<svg class="ic" style="left:307.0px;top:517.6px" width="36" height="36" viewBox="-18.0 -18.0 36 36"><path d="M-10.5,-5 C-8,-12 4,-16 12,-15.5 C12,-8 10,2 1,9" fill="#faf9f8" stroke="#8f8884" stroke-width="2" stroke-dasharray="2.8 1"/><polygon points="-8.2,-2.3 1.5,4.6 5,-9.5" fill="#ad745d"/><path d="M13,-16 L-8.2,-2.3" stroke="#ad745d" stroke-width="3.2" stroke-linecap="round"/><circle cx="6.2" cy="-9.9" r="1.5" fill="#24140e"/><circle cx="-3.1" cy="-1.7" r="1.5" fill="#24140e"/><circle cx="-6.5" cy="-2.6" r="1" fill="#7d7a20"/></svg>
<svg class="ic" style="left:307.0px;top:561.4px" width="36" height="36" viewBox="-18.0 -18.0 36 36"><path d="M-14,3 C-9,-6 -1,-9 6,-10 M-12.5,7 C-8,0 -3,-3 2,-4 M-9,9.5 C-6,4 -3,1 0,0" fill="none" stroke="#a58c80" stroke-width="2" stroke-dasharray="2.6 0.9"/><path d="M9,-8 C11,-1 8,7 -1,12.5 M5,-4 C6,1 3,7 -4,11.5 M1.5,0 C2,3 0,6 -5,9.5" fill="none" stroke="#a58c80" stroke-width="2" stroke-dasharray="2.6 0.9"/><path d="M12.3,-14.8 L-14,10.6" stroke="#ad745d" stroke-width="3" stroke-linecap="round"/><path d="M-2.8,-0.8 L5,-1.5 M-2.8,-0.8 L-3.5,7" stroke="#ad745d" stroke-width="1.8" stroke-linecap="round"/><circle cx="5.3" cy="-8.8" r="1.4" fill="#24140e"/><circle cx="-2.8" cy="-0.8" r="1.4" fill="#24140e"/></svg>
<svg class="ic" style="left:307.0px;top:615.0px" width="36" height="36" viewBox="-18.0 -18.0 36 36"><g transform="translate(0,-0.6)"><path d="M-16,-14.6 H7.5 L14,-8.5 V13.4 H-16 Z" fill="#8b8b8b" stroke="#5e5e5e" stroke-width="1.8" stroke-linejoin="round"/><path d="M-15,-13.6 H-9 V-2 H-15 Z" fill="#c4c4c4"/><path d="M-12,9 L-9.5,-2 L-4.5,-9 L-1,-2 L4,-9.5 L9.5,-3 L11,9 Z" fill="#f2eeec" stroke="#3f3c3c" stroke-width="1.6" stroke-linejoin="round"/><path d="M-11.5,9.5 L-1,-1.5 L10.5,9.5 Z" fill="none" stroke="#ad745d" stroke-width="2.6" stroke-linejoin="round"/><path d="M-1,-1.5 V9" stroke="#4a2c22" stroke-width="1.8"/><circle cx="-8" cy="9.8" r="1.1" fill="#8d8a30"/><circle cx="7" cy="9.8" r="1.1" fill="#8d8a30"/></g></svg>
<svg class="ic" style="left:307.0px;top:669.6px" width="36" height="36" viewBox="-18.0 -18.0 36 36"><path d="M-14.5,12 L-13.5,3 L-10.5,-2.5 L-7.5,4 L-3,0 L3,5 L8,2 L12.5,6 L13,12 Z" fill="#f5f2f0" stroke="#4f4b4b" stroke-width="1.7" stroke-linejoin="round"/><rect x="-6.8" y="-15.3" width="20.3" height="18.9" rx="1" fill="#e2e2e2" stroke="#4e4e4e" stroke-width="2.2"/><path d="M-2.4,-11 V-1.2 M2.2,-11 V-1.2 H4.8 C10.4,-1.2 10.4,-11 4.8,-11 H2.2" fill="none" stroke="#4a4a4a" stroke-width="2.2"/><path d="M-14.5,12 L-8.5,6.5 L-2.5,12 L4,6.5 L12.8,12" fill="none" stroke="#ad745d" stroke-width="2.8" stroke-linejoin="round" stroke-linecap="round"/><path d="M-15,12.7 H13" stroke="#ad745d" stroke-width="2.2"/><circle cx="-11" cy="12.7" r="1.1" fill="#7d7a20"/><circle cx="9" cy="12.7" r="1.1" fill="#7d7a20"/></svg>
<svg class="ic" style="left:307.0px;top:714.0px" width="36" height="36" viewBox="-18.0 -18.0 36 36"><path d="M-13.8,-14.9 H-2 V4 H-13.8 Z" fill="#c9c9c9" stroke="#7a7a7a" stroke-width="1.6"/><path d="M-3,-14 H8 L14.2,-8 V9 H-3 Z" fill="#bdbdbd" stroke="#4c4c4c" stroke-width="2" stroke-linejoin="round"/><path d="M-12.5,10.5 L-10.5,-1 L-5.5,-8 L-1.5,-1 L3.5,-8.5 L9,-2 L11,10.5 Z" fill="#f2eeec" stroke="#3f3c3c" stroke-width="1.6" stroke-linejoin="round"/><path d="M-12.5,11.5 L-1.5,0 L11,11.5 Z" fill="none" stroke="#ad745d" stroke-width="2.6" stroke-linejoin="round"/><path d="M-1.5,0 V11" stroke="#4a2c22" stroke-width="1.8"/><circle cx="-9" cy="11.8" r="1.1" fill="#8d8a30"/><circle cx="7.5" cy="11.8" r="1.1" fill="#8d8a30"/></svg>
<svg class="ic" style="left:307.0px;top:768.0px" width="36" height="36" viewBox="-18.0 -18.0 36 36"><path d="M-14.5,12 L-13.5,4 L-10.5,-2.5 L-7.5,4 L-3,1 L3,5 L8,3 L12.5,6 L12.8,12 Z" fill="#f5f2f0" stroke="#4f4b4b" stroke-width="1.7" stroke-linejoin="round"/><rect x="-2.6" y="-14.1" width="16.1" height="16.8" rx="1" fill="#dedede" stroke="#4e4e4e" stroke-width="2.2"/><path d="M1,-10.2 h9 M1,-7 h9 M1,-3.8 h9 M1,-0.6 h9" stroke="#8a8a8a" stroke-width="1.5"/><path d="M-14.5,12 L-8.5,6.5 L-2.5,12 L4,6.5 L12.8,12" fill="none" stroke="#ad745d" stroke-width="2.8" stroke-linejoin="round" stroke-linecap="round"/><path d="M-15,12.7 H13" stroke="#ad745d" stroke-width="2.2"/><path d="M-4,5 L1,3.5" stroke="#4a2c22" stroke-width="2.4" stroke-linecap="round"/><circle cx="-11" cy="12.7" r="1.1" fill="#7d7a20"/><circle cx="9" cy="12.7" r="1.1" fill="#7d7a20"/></svg>
<svg class="ic" style="left:307.0px;top:822.3px" width="36" height="36" viewBox="-18.0 -18.0 36 36"><path d="M-14,11 L-13,-3 L-10.5,-7 L-6,-2 L-1,-9 L3,-3 L8,-6.5 L12.5,-2 L13,11 Z" fill="#f7f5f4" stroke="#5a5656" stroke-width="1.7" stroke-linejoin="round"/><path d="M-13.8,11 L-4.5,1.5 L0.2,11 L5.1,1.5 L12.8,11" fill="none" stroke="#ad745d" stroke-width="2.8" stroke-linejoin="round" stroke-linecap="round"/><path d="M-14.2,11.6 H13.2" stroke="#ad745d" stroke-width="2.4" stroke-linecap="round"/><circle cx="-11" cy="11.6" r="1.1" fill="#7d7a20"/><circle cx="10" cy="11.6" r="1.1" fill="#7d7a20"/><path d="M-2.5,1.2 L0.2,4 L3.5,1.2 Z" fill="#4a2c22" stroke="#4a2c22" stroke-width="1.6" stroke-linejoin="round"/><path d="M13.2,-16.4 L4.4,-4.8" stroke="#f6f8f0" stroke-width="5.4" stroke-linecap="round"/><path d="M12.8,-15.8 L4.6,-5" stroke="#86a052" stroke-width="2.4" stroke-dasharray="1.8 1.4"/><path d="M14.6,-18.5 L12.4,-15.6" stroke="#4a4040" stroke-width="3" stroke-linecap="round"/><path d="M4.6,-5 L1.6,-1" stroke="#4a2c22" stroke-width="3" stroke-linecap="round"/></svg>
<svg class="ic" style="left:307.0px;top:867.0px" width="36" height="36" viewBox="-18.0 -18.0 36 36"><path d="M-14,11 L-13,-3 L-10.5,-7 L-6,-2 L-1,-9 L3,-3 L8,-6.5 L12.5,-2 L13,11 Z" fill="#f7f5f4" stroke="#5a5656" stroke-width="1.7" stroke-linejoin="round"/><path d="M-13.8,11 L-4.5,1.5 L0.2,11 L5.1,1.5 L12.8,11" fill="none" stroke="#ad745d" stroke-width="2.8" stroke-linejoin="round" stroke-linecap="round"/><path d="M-14.2,11.6 H13.2" stroke="#ad745d" stroke-width="2.4" stroke-linecap="round"/><circle cx="-11" cy="11.6" r="1.1" fill="#7d7a20"/><circle cx="10" cy="11.6" r="1.1" fill="#7d7a20"/><path d="M-2.5,1.2 L0.2,4 L3.5,1.2 Z" fill="#4a2c22" stroke="#4a2c22" stroke-width="1.6" stroke-linejoin="round"/><path d="M13.2,-16.4 L4.4,-4.8" stroke="#f6f8f0" stroke-width="5.4" stroke-linecap="round"/><path d="M12.8,-15.8 L4.6,-5" stroke="#86a052" stroke-width="2.4" stroke-dasharray="1.8 1.4"/><path d="M14.6,-18.5 L12.4,-15.6" stroke="#4a4040" stroke-width="3" stroke-linecap="round"/><path d="M4.6,-5 L1.6,-1" stroke="#4a2c22" stroke-width="3" stroke-linecap="round"/></svg>
<svg class="ic" style="left:307.0px;top:921.4px" width="36" height="36" viewBox="-18.0 -18.0 36 36"><path d="M-14,11 L-13,0 L-10.5,-4 L-6,1 L-1,-6 L3,0 L8,-3.5 L12.5,1 L13,11 Z" fill="#f7f5f4" stroke="#5a5656" stroke-width="1.7" stroke-linejoin="round"/><path d="M-13.8,11 L-4.5,1.5 L0.2,11 L5.1,1.5 L12.8,11" fill="none" stroke="#ad745d" stroke-width="2.8" stroke-linejoin="round" stroke-linecap="round"/><path d="M-14.2,11.6 H13.2" stroke="#ad745d" stroke-width="2.4" stroke-linecap="round"/><circle cx="-11" cy="11.6" r="1.1" fill="#7d7a20"/><circle cx="10" cy="11.6" r="1.1" fill="#7d7a20"/><path d="M-13.5,10.5 L-2,-9" stroke="#ad745d" stroke-width="3" stroke-linecap="round"/><path d="M-6.5,-6 L0.6,-10.4 L1,-5.4 L-3,-3.2 Z" fill="#4a2c22" stroke="#4a2c22" stroke-width="2" stroke-linejoin="round"/><path d="M-1.8,-3 L0.5,3" stroke="#4a2c22" stroke-width="2.2" stroke-linecap="round"/><path d="M5,-14 C9,-16.5 14.5,-15 14.8,-10 C15,-5 13,-1 8,-0.8 C4,-1 2.5,-4 3.2,-8 C3.5,-11 4,-13 5,-14 Z" fill="#4aa3f2" stroke="#3a86d8" stroke-width="1"/><path d="M13,-14 C15.8,-11 15.5,-5 12,-1.6" fill="none" stroke="#2c5a6a" stroke-width="2"/><path d="M6,-11 C8,-12.5 10,-12.5 11,-11.5 M5.5,-6 C7,-4.5 9,-4.5 10.5,-5.5" stroke="#a8d6fb" stroke-width="1.6" fill="none" stroke-linecap="round"/></svg>
<svg class="ic" style="left:307.0px;top:975.6px" width="36" height="36" viewBox="-18.0 -18.0 36 36"><path d="M-14,11 L-13,-2 L-10.5,-6 L-6,-1 L-1,-8 L3,-2 L8,-5.5 L12.5,-1 L13,11 Z" fill="#f7f5f4" stroke="#5a5656" stroke-width="1.7" stroke-linejoin="round"/><path d="M-13.8,11 L-4.5,1.5 L0.2,11 L5.1,1.5 L12.8,11" fill="none" stroke="#ad745d" stroke-width="2.8" stroke-linejoin="round" stroke-linecap="round"/><path d="M-14.2,11.6 H13.2" stroke="#ad745d" stroke-width="2.4" stroke-linecap="round"/><circle cx="-11" cy="11.6" r="1.1" fill="#7d7a20"/><circle cx="10" cy="11.6" r="1.1" fill="#7d7a20"/><polygon points="-10.3,-13.7 -5.3,-8.7 -10.3,-3.7 -15.3,-8.7" fill="#ad745d"/><path d="M-12.3,-8.2 h4" stroke="#4a2c22" stroke-width="2"/><path d="M-3,-6 L-3,4 M-8,-1 L3,-1" stroke="#4a4646" stroke-width="1.5"/><path d="M-4,6 L5.1,-1" stroke="#4a2c22" stroke-width="3.2" stroke-linecap="round"/><path d="M15.5,-16.5 C10,-15.5 6.5,-11 7,-5.5 C12.5,-6 15.8,-10.5 15.5,-16.5 Z" fill="#9db173" stroke="#6f8245" stroke-width="1.1"/><path d="M10,-12.5 l3,2 M8.5,-10 l3,2 M8,-7.5 l2,1.4" stroke="#cfdab2" stroke-width="1.1"/><path d="M14.5,-15 L5.5,-3.5" stroke="#5d7034" stroke-width="1.3"/></svg>
<svg class="ic" style="left:307.0px;top:1019.5px" width="36" height="36" viewBox="-18.0 -18.0 36 36"><path d="M-14,11 L-13,1 L-10,-3 L-7,1 L-6.5,-8 L-1.5,-9 L1,-2 L6,-4 L12.5,2 L13,11 Z" fill="#f7f5f4" stroke="#5a5656" stroke-width="1.7" stroke-linejoin="round"/><path d="M-13.8,11 L-8,5 L-3,11 M4,11 L8.5,5.5 L12.8,11" fill="none" stroke="#ad745d" stroke-width="2.6" stroke-linejoin="round" stroke-linecap="round"/><path d="M-14.2,11.8 H13.2" stroke="#ad745d" stroke-width="2.4" stroke-linecap="round"/><path d="M-1.9,7 L5.1,-1.5" stroke="#4a2c22" stroke-width="3.4" stroke-linecap="round"/><circle cx="-11" cy="11.8" r="1.1" fill="#7d7a20"/><circle cx="10" cy="11.8" r="1.1" fill="#7d7a20"/><path d="M16,-16.2 C10.5,-15.5 7,-11 7.4,-5.7 C13,-6 16.3,-10.5 16,-16.2 Z" fill="#9db173" stroke="#6f8245" stroke-width="1.1"/><path d="M10.5,-12.3 l3,2 M9,-9.8 l3,2 M8.4,-7.3 l2,1.4" stroke="#cfdab2" stroke-width="1.1"/><path d="M15,-15 L6,-3.5" stroke="#5d7034" stroke-width="1.3"/></svg>
<span class="t" style="left:395.2px;top:521.6px;font-size:23.5px;color:#ffffff;letter-spacing:0.121px;">Отрисовать стандартную</span>
<span class="t" style="left:395.2px;top:565.4px;font-size:23.5px;color:#1a1a1a;letter-spacing:0.443px;">Отрисовать интерполируемую</span>
<span class="t" style="left:395.2px;top:619.0px;font-size:23.5px;color:#1a1a1a;letter-spacing:0.080px;">Определить из чертежа...</span>
<span class="t" style="left:394.2px;top:673.6px;font-size:23.5px;color:#1a1a1a;letter-spacing:0.511px;">ID границы</span>
<span class="t" style="left:395.2px;top:718.0px;font-size:23.5px;color:#8f8f8f;letter-spacing:-0.084px;">Вставить в чертеж...</span>
<span class="t" style="left:395.2px;top:772.0px;font-size:23.5px;color:#8f8f8f;letter-spacing:0.523px;">Список границ...</span>
<span class="t" style="left:396.2px;top:826.3px;font-size:23.5px;color:#1a1a1a;letter-spacing:0.244px;">Табличный редактор...</span>
<span class="t" style="left:395.2px;top:871.0px;font-size:23.5px;color:#1a1a1a;letter-spacing:0.012px;">Редактор элементов...</span>
<span class="t" style="left:395.2px;top:925.4px;font-size:23.5px;color:#1a1a1a;letter-spacing:0.479px;">Обновить границы</span>
<span class="t" style="left:395.2px;top:979.6px;font-size:23.5px;color:#1a1a1a;letter-spacing:-0.073px;">Быстрое удаление</span>
<span class="t" style="left:396.2px;top:1023.5px;font-size:23.5px;color:#8f8f8f;letter-spacing:0.107px;">Удалить границы...</span>
<svg class="ic" style="left:306px;top:524px" width="36" height="46" viewBox="306 524 36 46"><path d="M311.6,528.6 V560.6 L318.8,553.8 L324.2,566.2 L329.6,563.8 L324.4,551.8 H334.6 Z" fill="#ffffff" stroke="#505050" stroke-width="2.2" stroke-linejoin="round"/></svg>
</div>
<svg class="ic" style="left:678.2px;top:617.2px" width="30" height="30" viewBox="-15 -15 30 30"><path d="M0,-12.7 L4.0,-8.5 L2.0,-8.5 L2.0,-2.0 L8.5,-2.0 L8.5,-4.0 L12.7,0 L8.5,4.0 L8.5,2.0 L2.0,2.0 L2.0,8.5 L4.0,8.5 L0,12.7 L-4.0,8.5 L-2.0,8.5 L-2.0,2.0 L-8.5,2.0 L-8.5,4.0 L-12.7,0 L-8.5,-4.0 L-8.5,-2.0 L-2.0,-2.0 L-2.0,-8.5 L-4.0,-8.5 Z" fill="#a9b97e" stroke="#6b7a2e" stroke-width="1.1" stroke-linejoin="miter"/><path d="M-1.6,-4 L1.7,-8 L1.7,-3 Z M-6,0.5 L-3,-1.7 L-2.6,1.7 Z M-1.2,2.6 L0.6,3 L-1.2,5.5 Z" fill="#8e8a48"/></svg>
</body></html>
